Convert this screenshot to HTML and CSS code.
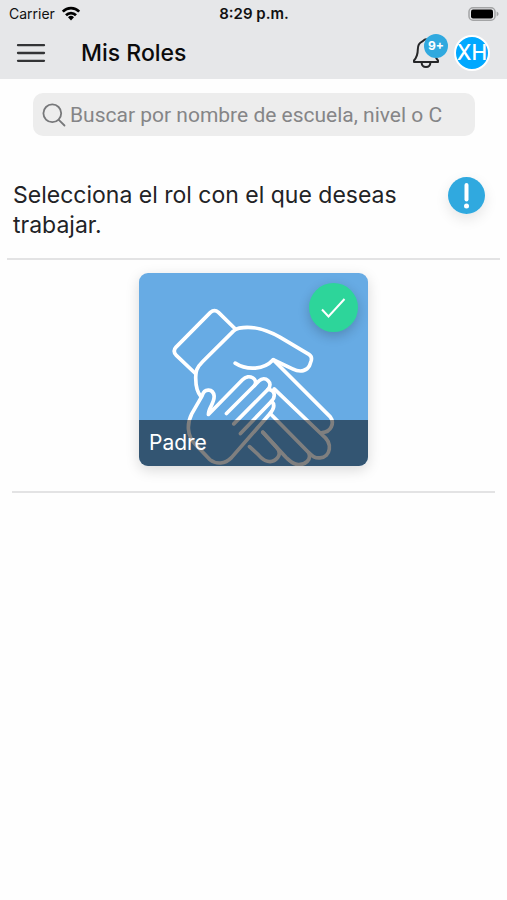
FILE: index.html
```
<!DOCTYPE html>
<html lang="es">
<head>
<meta charset="utf-8">
<meta name="viewport" content="width=device-width, initial-scale=1">
<title>Mis Roles</title>
<link rel="stylesheet" href="styles.css">
</head>
<body>
<header class="top">
  <div class="status">
    <div class="carrier">
      <span>Carrier</span>
      <svg width="20" height="15" viewBox="0 0 20 15" aria-hidden="true"><g fill="none" stroke="#000" stroke-width="2.7"><path d="M1.8 5.6A11.6 11.6 0 0 1 18.2 5.6"/><path d="M5 9.2A7 7 0 0 1 15 9.2"/></g><path d="M7 11.2A4.4 4.4 0 0 1 13 11.2L10 14.4Z"/></svg>
    </div>
    <time class="clock">8:29 p.m.</time>
    <svg class="battery" width="31" height="14" viewBox="0 0 31 14" aria-hidden="true"><rect x="1" y=".8" width="26" height="12.4" rx="4" fill="none" stroke="#a3a4a5" stroke-width="1.5"/><rect x="3" y="2.6" width="22" height="8.8" rx="2"/><path d="M28.6 4.6Q30.6 5.6 30.6 7T28.6 9.4Z" fill="#a3a4a5"/></svg>
  </div>
  <nav class="bar">
    <button class="icon-button" aria-label="Menú">
      <svg width="30" height="20" viewBox="0 0 30 20" aria-hidden="true"><path d="M2 2.2H28M2 10H28M2 17.8H28" stroke="#333436" stroke-width="2.3" stroke-linecap="round"/></svg>
    </button>
    <h1>Mis Roles</h1>
    <button class="icon-button bell" aria-label="Notificaciones">
      <svg width="28" height="34" viewBox="0 0 28 34" fill="none" stroke="#252628" stroke-width="2" stroke-linejoin="round" aria-hidden="true"><path d="M14 3.2C11.8 3.2 11.5 5 10 5.7C6.800 7.200 5.800 10 5.800 13.500C5.800 19 4.600 21.500 2 24.500V26H26V24.500C23.400 21.500 22.200 19 22.200 13.500C22.200 10 21.200 7.200 18 5.700C16.500 5 16.200 3.200 14 3.200Z"/><path d="M9.600 26.500C9.800 32.500 18.200 32.500 18.400 26.500"/></svg>
      <span class="count">9+</span>
    </button>
    <button class="avatar" aria-label="Perfil XH">XH</button>
  </nav>
</header>
<main>
  <label class="search">
    <svg width="24" height="24" viewBox="0 0 24 24" fill="none" stroke="#77787a" stroke-width="1.800" stroke-linecap="round" aria-hidden="true"><circle cx="10.300" cy="10.300" r="8.900"/><path d="M16.800 16.800L22.500 22.500"/></svg>
    <input type="search" aria-label="Buscar" placeholder="Buscar por nombre de escuela, nivel o C">
  </label>
  <section class="intro">
    <p>Selecciona el rol con el que deseas trabajar.</p>
    <button class="info" aria-label="Información">
      <svg width="37" height="37" viewBox="0 0 37 37" aria-hidden="true"><circle cx="18.500" cy="18.500" r="18.500" fill="#30a9df"/><path d="M18.500 8V22.500" stroke="#fff" stroke-width="4" stroke-linecap="round"/><circle cx="18.500" cy="29" r="2.500" fill="#fff"/></svg>
    </button>
  </section>
  <section class="roles">
    <button class="card">
      <svg class="art" viewBox="30 25 686 578" fill="none" stroke="#fff" stroke-width="11" stroke-linecap="round" stroke-linejoin="round" aria-hidden="true">
        <path d="M318 192L268 143Q256 132 244 143L141 247Q130 259 141 271L199 326"/>
        <path d="M318 295C354 318 405 315 432 285L490 312C515 325 534 317 541 302L546 287Q549 275 539 269L452 217C400 188 365 184 330 190Q318 192 312 200L221 290C202 309 199 320 200 342C200 366 204 382 216 396"/>
        <path d="M432 285L603 456C617 475 605 501 579 503"/>
        <path d="M435 372L580 511C612 535 604 577 572 579C556 580 550 574 538 563L423 446"/>
        <path d="M538 563C548 584 528 600 507 599C490 598 480 586 470 577L401 502"/>
        <path d="M401 502L441 546C464 570 438 594 415 589C402 587 394 577 386 568L361 545"/>
        <path d="M292 446L390 348C407 331 435 354 416 374L314 477"/>
        <path d="M416 374C435 374 442 393 427 409L334 506"/>
        <path d="M427 409C441 422 431 437 420 449L307 578C287 598 262 599 242 584L199 539C172 512 174 474 188 447L219 393C226 368 252 372 255 393C257 414 237 430 238 449L340 345C360 324 389 344 376 362"/>
      </svg>
      <span class="check"><svg width="49" height="49" viewBox="0 0 49 49" fill="none" aria-hidden="true"><path d="M13 26.500L19.500 33.500L35.500 16" stroke="#fff" stroke-width="2"/></svg></span>
      <span class="name">Padre</span>
    </button>
  </section>
</main>
</body>
</html>
```
FILE: styles.css
```
* {
  box-sizing: border-box;
}

body {
  margin: 0;
  background: #fefefe;
  color: #222326;
  font-family: Inter, "Liberation Sans", sans-serif;
}

button {
  padding: 0;
  border: 0;
  background: none;
  color: inherit;
  font: inherit;
}

svg {
  display: block;
}

.top {
  background: #e6e7e9;
}

.status {
  display: grid;
  grid-template-columns: 1fr auto 1fr;
  align-items: center;
  height: 27px;
  padding: 0 8px 0 9px;
  color: #111;
  font-size: 14px;
}

.carrier {
  display: flex;
  align-items: center;
  gap: 6px;
}

.clock {
  font-size: 15px;
  font-weight: 600;
}

.battery {
  justify-self: end;
}

.bar {
  display: flex;
  align-items: center;
  height: 52px;
  padding: 0 17px 0 16px;
}

h1 {
  flex: 1;
  margin: 0 0 0 35px;
  color: #0b0b0c;
  font-size: 23px;
  font-weight: 500;
}

.bell {
  position: relative;
  margin-right: 14px;
}

.count {
  position: absolute;
  top: -2px;
  right: -8px;
  width: 24px;
  border-radius: 50%;
  background: #30a9df;
  color: #fff;
  font-size: 12px;
  font-weight: 700;
  line-height: 24px;
}

.avatar {
  width: 36px;
  height: 36px;
  border: 2px solid #fff;
  border-radius: 50%;
  background: #00a8ff;
  color: #fff;
  font-size: 21px;
  font-weight: 500;
  line-height: 32px;
}

.search {
  display: flex;
  align-items: center;
  gap: 4px;
  height: 43px;
  margin: 14px 32px 0 33px;
  padding: 0 9px;
  border-radius: 10px;
  background: #ededed;
}

.search svg {
  flex: none;
}

.search input {
  flex: 1;
  min-width: 0;
  padding: 0;
  border: 0;
  outline: 0;
  background: none;
  font-family: Roboto, "Liberation Sans", sans-serif;
  font-size: 21px;
}

.search input::placeholder {
  color: #858587;
}

.intro {
  display: flex;
  align-items: flex-start;
  justify-content: space-between;
  margin: 0 7px;
  padding: 41px 15px 18px 6px;
  border-bottom: 2px solid #e3e3e4;
}

.intro p {
  max-width: 400px;
  margin: 3px 0 0;
  font-size: 23px;
  line-height: 30px;
}

.info {
  border-radius: 50%;
  box-shadow: 0 5px 14px rgba(0, 0, 0, 0.1);
}

.roles {
  display: flex;
  justify-content: center;
  margin: 0 12px;
  padding: 13px 0 25px;
  border-bottom: 2px solid #e3e3e4;
}

.card {
  position: relative;
  width: 229px;
  overflow: hidden;
  border-radius: 9px;
  background: #67abe4;
  box-shadow: 0 4px 14px rgba(0, 0, 0, 0.15);
}

.art {
  width: 100%;
}

.check {
  position: absolute;
  top: 10px;
  right: 10px;
  border-radius: 50%;
  background: #2dd59a;
  box-shadow: 0 4px 12px rgba(0, 0, 0, 0.2);
}

.name {
  position: absolute;
  right: 0;
  bottom: 0;
  left: 0;
  padding: 0 10px;
  background: rgba(0, 0, 0, 0.5);
  color: #fff;
  font-size: 21px;
  line-height: 46px;
  text-align: left;
}
```
